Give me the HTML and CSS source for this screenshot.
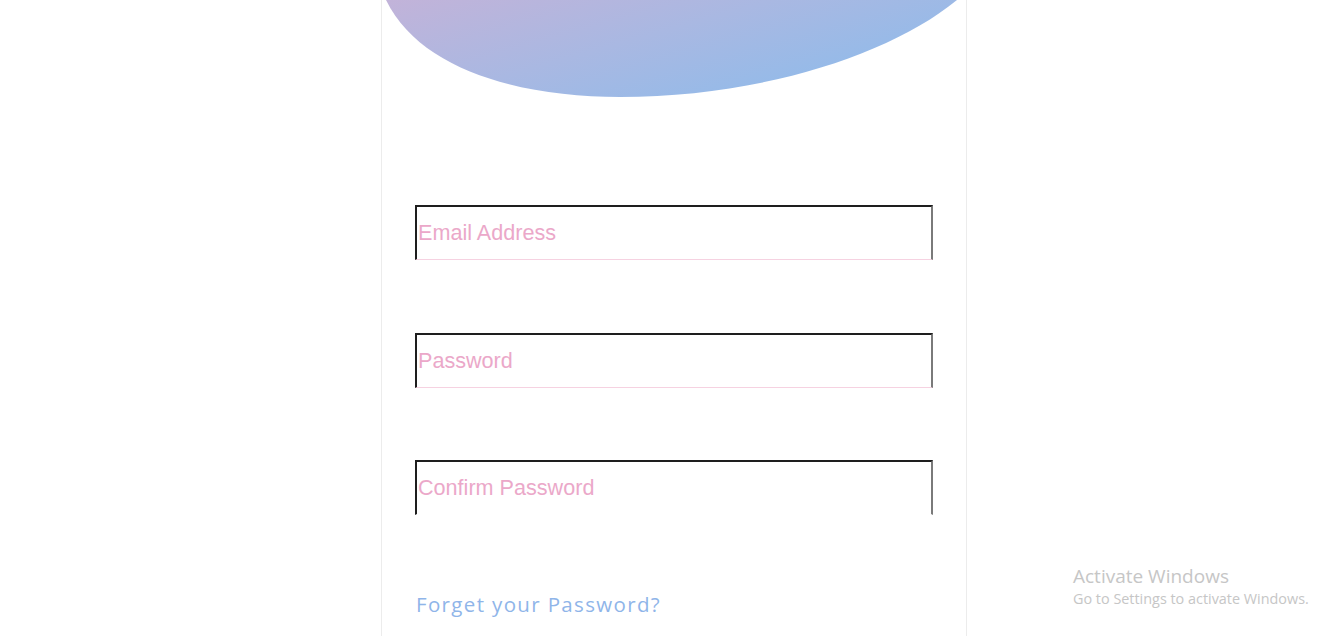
FILE: index.html
```html
<!DOCTYPE html>
<html lang="en">
<head>
<meta charset="utf-8">
<title>Sign up</title>
<link rel="stylesheet" href="styles.css">
</head>
<body>
<div class="card">
  <svg class="blob" width="584" height="100" viewBox="382 0 584 100" aria-hidden="true">
    <defs>
      <linearGradient id="g" x1="0" y1="0" x2="1" y2="0.6">
        <stop offset="0" stop-color="#c2b3d9"/>
        <stop offset="0.5" stop-color="#a9b8e2"/>
        <stop offset="1" stop-color="#90bbea"/>
      </linearGradient>
    </defs>
    <path d="M386,0 C420,70 520,97 620,97 C760,97 890,55 957,0 Z" fill="url(#g)"/>
  </svg>
  <form class="form">
    <input class="field" type="email" placeholder="Email Address">
    <input class="field field-mid" type="password" placeholder="Password">
    <input class="field field-last" type="password" placeholder="Confirm Password">
    <a class="forgot" href="#">Forget your Password?</a>
  </form>
</div>
<div class="watermark">
  <div class="wm-title">Activate Windows</div>
  <div class="wm-sub">Go to Settings to activate Windows.</div>
</div>
</body>
</html>
```
FILE: styles.css
```css
html, body {
  margin: 0;
  padding: 0;
  background: #ffffff;
  height: 100%;
  overflow: hidden;
}
body {
  font-family: "Liberation Sans", Arial, sans-serif;
}
.card {
  margin-left: 381px;
  width: 584px;
  height: 700px;
  border-left: 1px solid #ececec;
  border-right: 1px solid #ececec;
}
.blob {
  display: block;
}
.form {
  display: flex;
  flex-direction: column;
  align-items: flex-start;
  padding: 105px 32px 0 33px;
}
.field {
  box-sizing: border-box;
  width: 518px;
  height: 55px;
  margin: 0 0 73px 0;
  padding: 0 0 1px 1px;
  border-style: solid;
  border-width: 2px 2px 1px 2px;
  border-color: #1e1e1e #7a7a7a #f6d2e1 #1e1e1e;
  background: #fff;
  font-family: "Liberation Sans", Arial, sans-serif;
  font-size: 21.6px;
  color: #333;
  outline: none;
}
.field::placeholder {
  color: #eba8c9;
  opacity: 1;
}
.field-mid {
  margin-bottom: 72px;
}
.field-last {
  margin-bottom: 73px;
  border-bottom-color: #ffffff;
}
.forgot {
  font-family: "Open Sans", "Noto Sans", sans-serif;
  font-size: 20.5px;
  line-height: 30px;
  color: #8fb5e9;
  text-decoration: none;
  letter-spacing: 1.35px;
  margin-top: 1px;
  margin-left: 1px;
}
.watermark {
  position: absolute;
  left: 1073px;
  top: 563px;
  font-family: "Open Sans", "Noto Sans", sans-serif;
  color: #c6c6c6;
}
.wm-title {
  font-size: 19px;
  line-height: 26px;
}
.wm-sub {
  font-size: 14.4px;
  line-height: 20px;
}
```
